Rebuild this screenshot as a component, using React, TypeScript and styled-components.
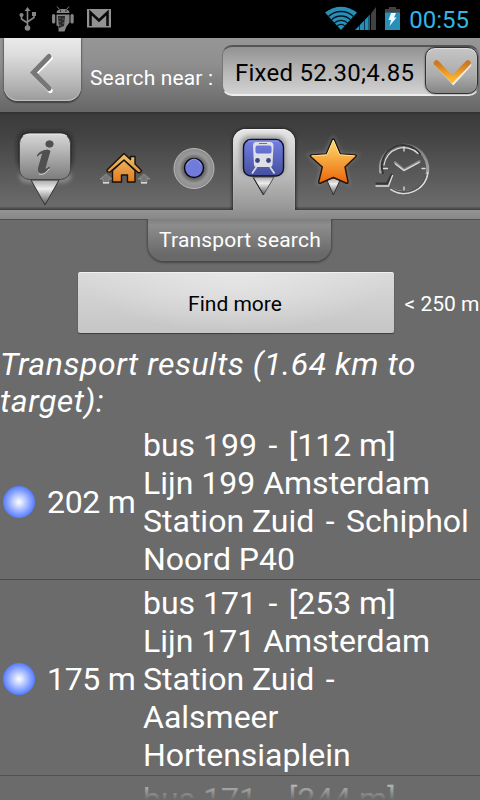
import React from "react";
import styled, { createGlobalStyle } from "styled-components";

const GlobalStyle = createGlobalStyle`
  * { box-sizing: border-box; }
  body { margin: 0; background: #6b6b6b; font-family: Roboto, "Noto Sans", sans-serif; }
  svg { display: block; flex: none; }
`;

const Screen = styled.main`
  width: 480px;
  height: 800px;
  overflow: hidden;
  display: flex;
  flex-direction: column;
  background: #6b6b6b;
  color: #fff;
  position: relative;
`;

const Label = styled.span<{ $size?: number; $track?: number }>`
  font-size: ${(p) => p.$size ?? 21}px;
  letter-spacing: ${(p) => p.$track ?? 0}px;
  white-space: pre;
`;

const StatusBar = styled.header`
  height: 38px;
  flex: none;
  background: #000;
  display: flex;
  align-items: center;
  justify-content: space-between;
  color: #33b5e5;
`;

const StatusTime = styled.div`
  display: flex;
  align-items: center;
  gap: 8px;
  padding: 2px 11px 0 0;
  & > svg { margin-top: -2px; }
`;

const SearchBar = styled.section`
  height: 74px;
  flex: none;
  display: flex;
  align-items: flex-start;
  background: linear-gradient(#969696, #8f8f8f 35%, #666);
`;

const BackButton = styled.button`
  width: 77px;
  height: 63px;
  margin: 0 1px 0 4px;
  padding: 0;
  border: 0;
  border-radius: 0 0 14px 14px;
  background: linear-gradient(#e9e9e9, #dedede 25%, #b4b4b4 75%, #9a9a9a);
  box-shadow: 0 2px 1px #444, 0 0 2px 1px #666, inset 0 -1px 1px #c4c4c4;
  clip-path: inset(0 -4px -5px -4px);
`;

const SearchCaption = styled.div`
  width: 140px;
  padding: 27px 0 0 8px;
  line-height: 26px;
`;

const Selector = styled.div`
  width: 257px;
  height: 51px;
  margin-top: 7px;
  padding-left: 12px;
  display: flex;
  align-items: center;
  justify-content: space-between;
  color: #000;
  border-radius: 10px;
  border: 1px solid #777;
  border-top: 2px solid #555;
  border-bottom: 2px solid #eee;
  background: linear-gradient(#929292, #b2b2b2 45%, #d2d2d2);
  & > span { padding-top: 4px; }
`;

const DropButton = styled.button`
  width: 53px;
  height: 47px;
  border: 1px solid #333;
  border-radius: 10px;
  padding: 0;
  background: linear-gradient(#c5c5c5, #acacac 60%, #858585);
  box-shadow: inset 0 1px 1px #ddd, 0 0 2px #444;
`;

const TabStrip = styled.nav`
  height: 98px;
  flex: none;
  display: flex;
  border-top: 2px solid #333;
  background: linear-gradient(#3b3b3b, #424242 20%, #686868 90%, #6b6b6b 96%, #3c3c3c);
`;

const Tab = styled.div<{ $w: number }>`
  width: ${(p) => p.$w}px;
  height: 96px;
  flex: none;
`;

const ActiveTab = styled.div`
  width: 62px;
  height: 81px;
  margin: 15px 3px 0 4px;
  flex: none;
  border-radius: 13px 13px 0 0;
  background: linear-gradient(#e6e6e6, #c9c9c9 40%, #959595);
  box-shadow: inset 0 1px 1px #f2f2f2, 0 0 3px 1px #252525;
  clip-path: inset(-4px -4px 0 -4px);
`;

const Band = styled.div`
  height: 10px;
  flex: none;
  background: linear-gradient(#949494, #888);
  border-bottom: 1px solid #505050;
`;

const Caption = styled.h1`
  width: 183px;
  height: 42px;
  margin: -1px 0 0 148px;
  padding-left: 1px;
  flex: none;
  display: flex;
  justify-content: center;
  line-height: 42px;
  font-weight: 400;
  border-radius: 0 0 16px 16px;
  background: linear-gradient(#7e7e7e, #8d8d8d 15%, #696969 85%);
  box-shadow: 0 1px 2px 1px #484848;
  clip-path: inset(0 -4px -5px -4px);
`;

const FindRow = styled.div`
  display: flex;
  align-items: center;
  margin: 10px 0 1px 78px;
  height: 62px;
  flex: none;
`;

const FindButton = styled.button`
  width: 316px;
  height: 61px;
  flex: none;
  border: 0;
  border-radius: 2px;
  padding: 3px 2px 0 0;
  font-family: inherit;
  color: #000;
  background: radial-gradient(ellipse at 50% 0, #e6e6e6, rgba(220, 220, 220, 0) 70%), linear-gradient(#dadada, #c5c5c5);
  box-shadow: 0 1px 1px #3c3c3c, 0 0 1px #444, inset 0 1px #f0f0f0;
  margin-right: 10.500px;
`;

const Distance = styled.div`
  padding-top: 4px;
`;

const ResultsTitle = styled.h2`
  margin: 12px 0 2px;
  height: 74px;
  flex: none;
  line-height: 37px;
  font-size: 32px;
  font-weight: 400;
  font-style: italic;
`;

const Row = styled.article<{ $tall?: boolean }>`
  flex: none;
  display: flex;
  align-items: ${(p) => (p.$tall ? "flex-start" : "center")};
  min-height: ${(p) => (p.$tall ? 196 : 0)}px;
  font-size: 32px;
  line-height: 38px;
  padding: 4px 0 1px 3px;
  border-bottom: 1px solid #4b4b4b;
`;

const Hyphen = styled.span`
  padding: 0 3.500px;
`;

const Dot = styled.i`
  width: 32px;
  height: 32px;
  flex: none;
  align-self: center;
  border-radius: 50%;
  background: radial-gradient(circle closest-side, #fff, #557cff);
`;

const RowDistance = styled.div`
  width: 97px;
  flex: none;
  padding-left: 12px;
  margin-right: 11px;
`;

const Fade = styled.div`
  position: absolute;
  inset: auto 0 0 0;
  height: 30px;
  background: linear-gradient(rgba(107, 107, 107, 0), #6b6b6b);
`;

const Notifications = () => (
  <svg width="120" height="38" viewBox="0 0 120 38">
    <g fill="none" stroke="#858585" strokeWidth="1.6">
      <path d="M27.5 28V10M21.5 15v4l6 4M34 15v2.5l-6.5 4.5" />
    </g>
    <g fill="#858585">
      <path d="M27.5 7l3 4h-6z" />
      <circle cx="27.5" cy="28" r="2.8" />
      <circle cx="21.5" cy="15" r="2.1" />
      <path d="M32 12h4v4h-4z" />
      <path d="M56.5 13c.2-3 2.500-4 6.500-4s6.300 1 6.500 4z" />
      <path d="M57 6.500l2.500 3M69 6.500l-2.500 3" stroke="#858585" />
      <rect x="52" y="14" width="3.200" height="9.500" rx="1.500" />
      <rect x="70.500" y="14" width="3.200" height="9.500" rx="1.500" />
      <path d="M56.500 14.500h13v8l-3 4-2 5h-6v-5l-2-1z" />
    </g>
    <g fill="#111">
      <circle cx="60.500" cy="11" r=".7" />
      <circle cx="66" cy="11" r=".7" />
      <path d="M58 16h7l-1 10-5 2z" opacity=".8" />
    </g>
    <g fill="#999">
      <circle cx="60" cy="18" r=".6" /><circle cx="63" cy="19" r=".6" /><circle cx="60" cy="21.500" r=".6" />
      <circle cx="63" cy="23" r=".6" /><circle cx="60" cy="25" r=".6" />
    </g>
    <path fill="#929292" d="M87 9h24v18.500H87z" />
    <path d="M90.500 26V12.500l8.500 8 8.500-8V26" fill="none" stroke="#0a0a0a" strokeWidth="2.600" />
  </svg>
);

const Signals = () => (
  <svg width="76" height="38" viewBox="324 0 76 38">
    <clipPath id="wifi"><path d="M340 30L324 12.500Q340 1 356 12.500z" /></clipPath>
    <g clipPath="url(#wifi)">
      <circle cx="340" cy="30" r="24" fill="#2790b8" />
      <g fill="none" stroke="#00151d" strokeWidth="1.300">
        <circle cx="340" cy="30" r="18.500" /><circle cx="340" cy="30" r="14" />
        <circle cx="340" cy="30" r="9.700" /><circle cx="340" cy="30" r="5.600" />
      </g>
    </g>
    <path d="M354 30L369 14.500V30z" fill="#2790b8" />
    <path d="M358.500 25v5M363.500 20v10M368 15v15" stroke="#073546" strokeWidth="1" />
    <path d="M370 13.500l5-6.500v23h-5z" fill="#424242" />
    <path d="M388 7h7v2h4v4h-15V9h4z" fill="#424242" />
    <path d="M384 12.500h15V30h-15z" fill="#2790b8" />
    <path d="M390 13h5l-2 4.500h2.500L388.500 26l1.500-6h-2.500z" fill="#eefaff" />
  </svg>
);

const BackGlyph = () => (
  <svg width="77" height="63" viewBox="4 38 77 63">
    <path d="M49.500 57.500L34 73l15.500 17" fill="none" stroke="#fff" strokeWidth="5" strokeLinecap="round" transform="translate(.8 .6)" />
    <path d="M49 56.500L33.500 72.500l15.500 16" fill="none" stroke="#777" strokeWidth="5" strokeLinecap="round" />
  </svg>
);

const DropGlyph = () => (
  <svg width="51" height="45" viewBox="425 48 51 45">
    <linearGradient id="dg" x2="0" y2="1"><stop stopColor="#cd7724" /><stop offset="1" stopColor="#ffb62c" /></linearGradient>
    <path d="M436 64l15.500 17L467 64" fill="none" stroke="#eee" strokeWidth="5" strokeLinecap="round" transform="translate(.8 .8)" />
    <path d="M435.500 63L451 79.500 467 63" fill="none" stroke="url(#dg)" strokeWidth="5.500" strokeLinecap="round" />
  </svg>
);

const InfoPin = () => (
  <svg width="89" height="96" viewBox="0 114 89 96">
    <defs>
      <linearGradient id="ib" x2="0" y2="1"><stop stopColor="#d8d8d8" /><stop offset="1" stopColor="#7c7c7c" /></linearGradient>
      <linearGradient id="ip" x2="0" y2="1"><stop stopColor="#aaa" /><stop offset=".35" stopColor="#eee" /><stop offset="1" stopColor="#555" /></linearGradient>
      <filter id="soft" x="-30%" y="-30%" width="160%" height="160%"><feGaussianBlur stdDeviation="2" /></filter>
    </defs>
    <rect x="18" y="132" width="54" height="38" rx="10" fill="#222" filter="url(#soft)" />
    <path d="M19 174q0 9 9 9h33q11 0 11-9" fill="#aaa" opacity=".6" filter="url(#soft)" />
    <path d="M31 180h28L45 205z" fill="url(#ip)" stroke="#333" />
    <rect x="19.500" y="133.500" width="51" height="46" rx="10" fill="url(#ib)" stroke="#444" />
    <path d="M23 136q3-2 7-2h30q4 0 7 2" fill="none" stroke="#eee" />
    <g fill="#505050" stroke="#505050">
      <ellipse cx="49.500" cy="144" rx="3.700" ry="3.200" />
      <path d="M37 156q2-4 6-5 5-2 7 0l-5 17q-.4 3 4.500-1-4 6.500-9 6-3-1-2-5l4-14q-1-2-5 2z" />
    </g>
    <path d="M39 174q5 2 10-5" fill="none" stroke="#e5e5e5" strokeWidth=".8" />
  </svg>
);

const HomeGlyph = () => (
  <svg width="70" height="96" viewBox="89 114 70 96">
    <linearGradient id="hg" gradientUnits="userSpaceOnUse" x1="0" y1="153" x2="0" y2="182"><stop stopColor="#ecc676" /><stop offset="1" stopColor="#e27a1e" /></linearGradient>
    <g fill="#777" stroke="#bbb" strokeWidth=".4">
      <path d="M106 174l6 5h-3v4h-6v-4h-3z" /><path d="M144 174l6 5h-3v4h-6v-4h-3z" />
      <path d="M103 182.800h6M141 182.800h6" stroke="#eee" strokeWidth="1.200" />
    </g>
    <g fill="url(#hg)" stroke="#16120c" strokeWidth="1.400" strokeLinejoin="round">
      <path d="M112.500 170.500L124 160l11 10.500V182h-7.500v-7h-6v7h-9z" />
      <path d="M107 170l17-16.500 6.500 6v-3h4.500v7.500l6.500 6.500q-1 3-3.500 2L124 160l-14 12q-3 .5-3-2z" />
    </g>
  </svg>
);

const PointGlyph = () => (
  <svg width="70" height="96" viewBox="159 114 70 96">
    <radialGradient id="pr"><stop offset=".45" stopColor="#555" /><stop offset=".75" stopColor="#999" /><stop offset="1" stopColor="#8c8c8c" /></radialGradient>
    <circle cx="194" cy="168.500" r="20" fill="url(#pr)" stroke="#c9c9c9" strokeWidth=".8" />
    <circle cx="194" cy="168" r="9.500" fill="#717bdc" stroke="#080811" strokeWidth="1.400" />
    <path d="M186.500 165q3-6 7.500-6t7.500 6" fill="none" stroke="#98a0ef" />
  </svg>
);

const TransportPin = () => (
  <svg width="62" height="81" viewBox="233 129 62 81">
    <linearGradient id="tb" x2="0" y2="1"><stop stopColor="#7380e5" /><stop offset="1" stopColor="#454f9c" /></linearGradient>
    <rect x="240" y="135.500" width="46" height="40" rx="9" fill="#888" opacity=".7" filter="url(#soft)" />
    <path d="M253 177h21l-10.500 18z" fill="url(#ip)" stroke="#555" />
    <path d="M253.500 178L263.500 195" stroke="#222" />
    <rect x="243.500" y="139.500" width="40" height="36.500" rx="7.500" fill="url(#tb)" stroke="#111324" strokeWidth="1.400" />
    <path d="M248 141h31" stroke="#9ea8ff" strokeWidth=".8" />
    <path fillRule="evenodd" fill="#dedee5" d="M256 142h14q3.500 0 3.500 4l-1 19q-.3 2-2.500 2h-13.500q-2.300 0-2.500-2l-1-19q0-4 3-4zm1.500 3.500q-2 0-2 2v4q0 2 2 2h12q2 0 2-2v-4q0-2-2-2z" />
    <g fill="#3b4383"><circle cx="257.500" cy="160.500" r="2.400" /><circle cx="268.500" cy="160.500" r="2.400" /></g>
    <path d="M256.500 167l-4.500 6.500M270 167l4.500 6.500" fill="none" stroke="#d8d8dd" strokeWidth="1.800" />
    <path d="M259 143.500h8" stroke="#4c559a" strokeWidth=".8" />
  </svg>
);

const FavoritePin = () => (
  <svg width="70" height="96" viewBox="298 114 70 96">
    <linearGradient id="fg" x2="0" y2="1"><stop stopColor="#ffe06f" /><stop offset="1" stopColor="#ec6408" /></linearGradient>
    <path d="M333.300 138l7 15.500 17 1.500-13 12 4.500 17-15.500-8-15.500 8 4-17-13-12 17-2z" fill="#aaa" stroke="#888" strokeWidth="3" opacity=".5" filter="url(#soft)" />
    <path d="M326 178h15l-7.700 17z" fill="url(#ip)" stroke="#333" />
    <path d="M333.300 139q.6 0 1 .9l6 14 15 1q1.800.3.500 1.800L345 167l3 14.500q.3 2.500-2 1.500l-12.700-5.500-12.500 5.500q-2.500 1-2-1.500l3.500-14.500-11.500-10.300q-1.400-1.500.5-1.800l15-1 6-14q.4-.9 1-.9z" fill="url(#fg)" stroke="#20150b" strokeWidth="1.400" strokeLinejoin="round" />
    <path d="M333.300 140l-6.300 14.800-15 1M333.300 140l6.300 14.800 15 1" fill="none" stroke="#fff0b6" strokeWidth=".8" />
  </svg>
);

const HistoryGlyph = () => (
  <svg width="70" height="96" viewBox="368 114 70 96">
    <linearGradient id="hc" x2="0" y2="1"><stop stopColor="#777" /><stop offset=".5" stopColor="#a0a0a0" /><stop offset="1" stopColor="#bbb" /></linearGradient>
    <g fill="none" strokeLinecap="round">
      <path d="M380.500 172A23.700 23.700 0 1 1 391.500 189" stroke="url(#hc)" strokeWidth="3" />
      <path d="M391 188A23 23 0 0 0 426 175" stroke="#555" strokeWidth="2" />
      <path d="M383 173A21 21 0 0 1 420 154M376.500 183.500h10.500l4.500-9" stroke="#353535" strokeWidth="2" />
      <path d="M376 186h12.500l4-10.500M384 165a20 20 0 0 1 34-11.500M391 189.500a24 24 0 0 0 37-17" stroke="#dedede" strokeWidth="1.300" />
      <path d="M395 162.500l9 7.500 15.500-8.500" stroke="#8a8a8a" strokeWidth="2.600" />
      <path d="M395.500 164l8.500 6.500 15-8M404 147v4M404 187v3M383.500 168.500h4M422 168.500h3" stroke="#ddd" strokeWidth="1.300" />
    </g>
  </svg>
);

const results = [
  { distance: "202 m", text: "bus 199 - [112 m]\nLijn 199 Amsterdam\nStation Zuid - Schiphol\nNoord P40" },
  { distance: "175 m", text: "bus 171 - [253 m]\nLijn 171 Amsterdam\nStation Zuid -\nAalsmeer\nHortensiaplein" },
  { distance: "", text: "bus 171 - [244 m]", tall: true },
];

/* Route names get a little extra room around each dash. */
const RouteText = ({ text }: { text: string }) => (
  <Label $size={32}>
    {text.split("-").map((part, i) => (
      <React.Fragment key={i}>
        {i > 0 && <Hyphen>-</Hyphen>}
        {part}
      </React.Fragment>
    ))}
  </Label>
);

export default function App() {
  return (
    <Screen>
      <GlobalStyle />
      <StatusBar>
        <Notifications />
        <StatusTime><Signals /><Label $size={24}>00:55</Label></StatusTime>
      </StatusBar>
      <SearchBar>
        <BackButton aria-label="Back"><BackGlyph /></BackButton>
        <SearchCaption><Label $track={0.15}>Search near :</Label></SearchCaption>
        <Selector>
          <Label $size={24} $track={0.25}>Fixed 52.30;4.85</Label>
          <DropButton aria-label="Choose location"><DropGlyph /></DropButton>
        </Selector>
      </SearchBar>
      <TabStrip>
        <Tab $w={89}><InfoPin /></Tab>
        <Tab $w={70}><HomeGlyph /></Tab>
        <Tab $w={70}><PointGlyph /></Tab>
        <ActiveTab><TransportPin /></ActiveTab>
        <Tab $w={70}><FavoritePin /></Tab>
        <Tab $w={70}><HistoryGlyph /></Tab>
      </TabStrip>
      <Band />
      <Caption><Label $track={0.2}>Transport search</Label></Caption>
      <FindRow>
        <FindButton><Label>Find more</Label></FindButton>
        <Distance><Label>{"< 250 m"}</Label></Distance>
      </FindRow>
      <ResultsTitle><Label $size={32} $track={0.54}>{"Transport results (1.64 km to\ntarget):"}</Label></ResultsTitle>
      {results.map((r) => (
        <Row key={r.text} $tall={r.tall}>
          <Dot />
          <RowDistance><Label $size={32} $track={-0.3}>{r.distance}</Label></RowDistance>
          <RouteText text={r.text} />
        </Row>
      ))}
      <Fade />
    </Screen>
  );
}
